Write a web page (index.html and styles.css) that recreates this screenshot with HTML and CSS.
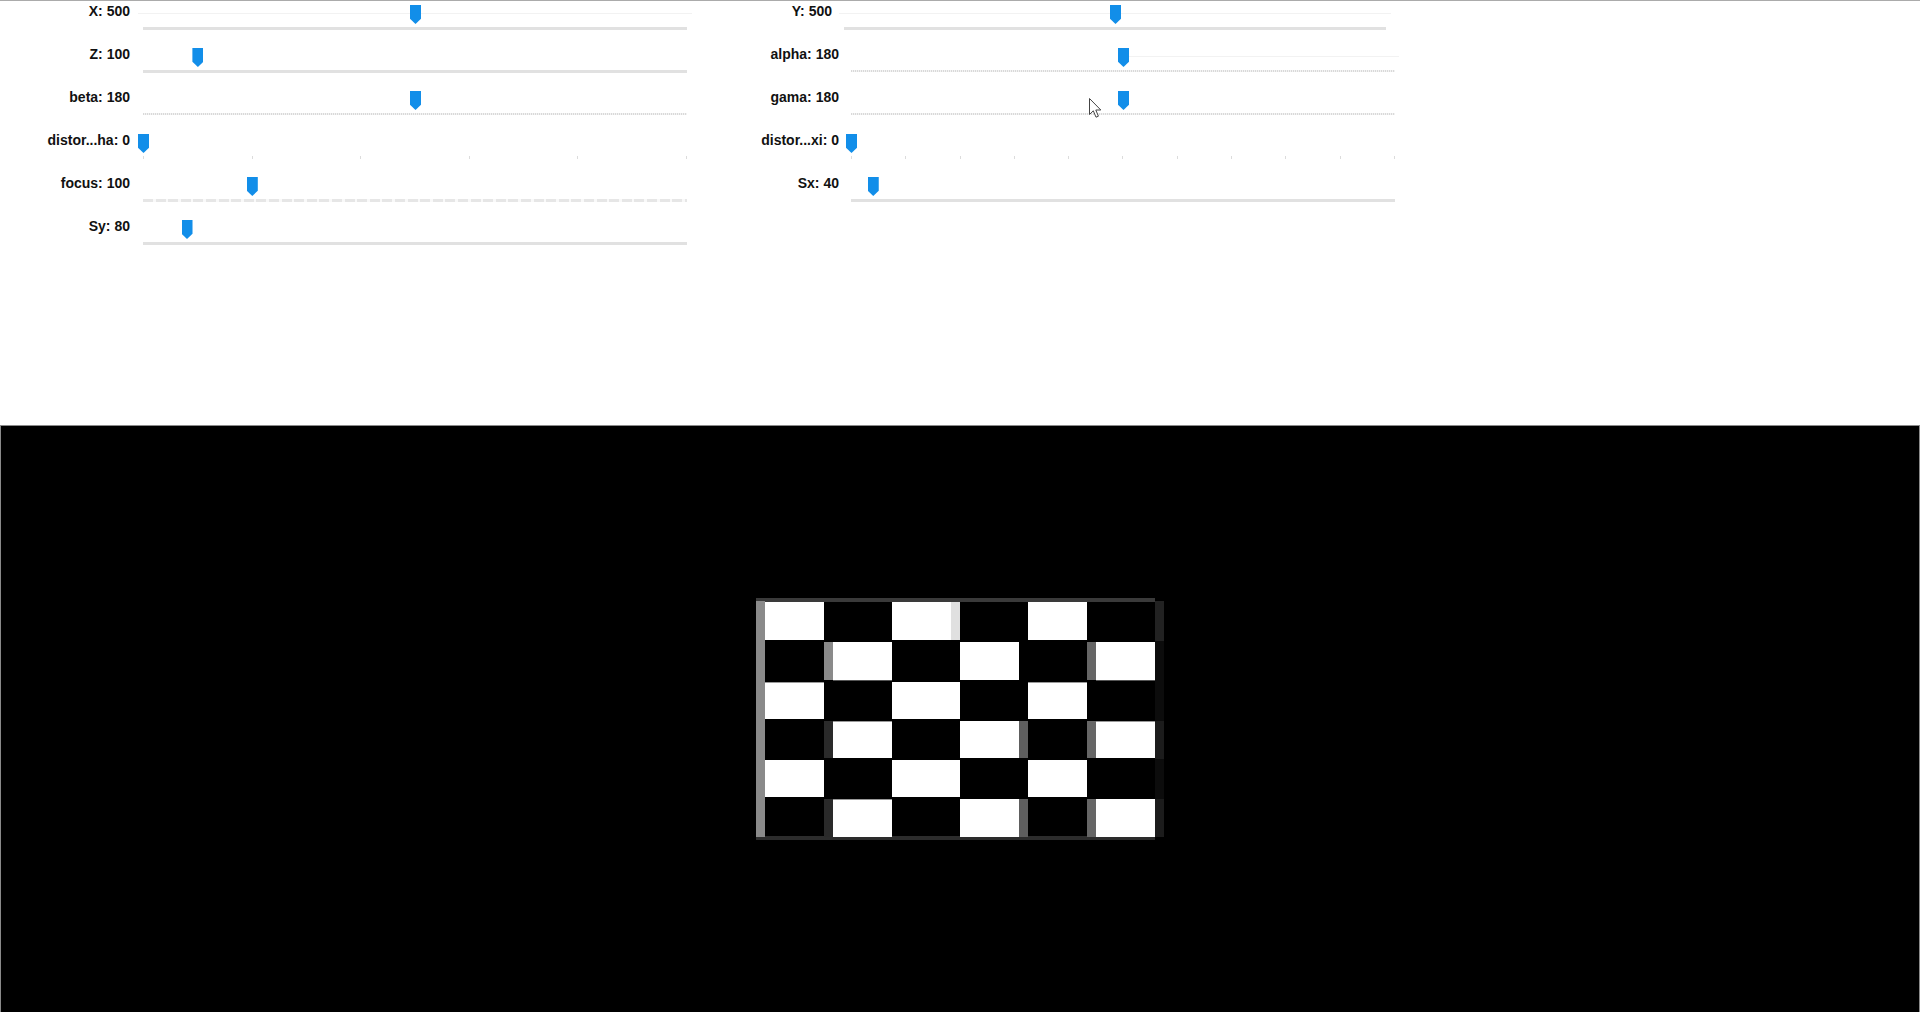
FILE: index.html
```html
<!DOCTYPE html>
<html lang="en">
<head>
<meta charset="utf-8">
<title>Trackbars</title>
<link rel="stylesheet" href="styles.css">
</head>
<body>
<section class="controls">
  <div class="column column-left">
    <div class="row"><span class="label">X: 500</span><div class="slider"><i class="faint"></i><div class="track solid"></div><b class="thumb" style="left:50%"></b></div></div>
    <div class="row"><span class="label">Z: 100</span><div class="slider"><div class="track solid"></div><b class="thumb" style="left:10%"></b></div></div>
    <div class="row"><span class="label">beta: 180</span><div class="slider"><div class="track dotted"></div><b class="thumb" style="left:50%"></b></div></div>
    <div class="row"><span class="label">distor...ha: 0</span><div class="slider"><div class="ticks"><i></i><i></i><i></i><i></i><i></i><i></i></div><b class="thumb" style="left:0%"></b></div></div>
    <div class="row"><span class="label">focus: 100</span><div class="slider"><div class="track dashed"></div><b class="thumb" style="left:20%"></b></div></div>
    <div class="row"><span class="label">Sy: 80</span><div class="slider"><div class="track solid"></div><b class="thumb" style="left:8%"></b></div></div>
  </div>
  <div class="column column-right">
    <div class="row row-shift"><span class="label">Y: 500</span><div class="slider slider-short"><i class="faint"></i><div class="track solid"></div><b class="thumb" style="left:50%"></b></div></div>
    <div class="row"><span class="label">alpha: 180</span><div class="slider"><i class="faint faint-right"></i><div class="track dotted"></div><b class="thumb" style="left:50%"></b></div></div>
    <div class="row"><span class="label">gama: 180</span><div class="slider"><div class="track dotted"></div><b class="thumb" style="left:50%"></b></div></div>
    <div class="row"><span class="label">distor...xi: 0</span><div class="slider"><div class="ticks"><i></i><i></i><i></i><i></i><i></i><i></i><i></i><i></i><i></i><i></i><i></i></div><b class="thumb" style="left:0%"></b></div></div>
    <div class="row"><span class="label">Sx: 40</span><div class="slider"><div class="track solid"></div><b class="thumb" style="left:4%"></b></div></div>
  </div>
</section>
<section class="view">
  <svg class="board" width="408" height="242" viewBox="0 0 408 242">
    <rect x="0" y="0" width="408" height="242" fill="#000"/>
    <rect x="0" y="0" width="399" height="4" fill="#3a3a3a"/>
    <rect x="0" y="238" width="399" height="4" fill="#2c2c2c"/>
    <rect x="0" y="3" width="9" height="236" fill="#8a8a8a"/>
    <rect x="399" y="3" width="9" height="40" fill="#222"/>
    <rect x="399" y="43" width="9" height="80" fill="#0c0c0c"/>
    <rect x="399" y="123" width="9" height="38" fill="#1c1c1c"/>
    <rect x="399" y="161" width="9" height="40" fill="#0c0c0c"/>
    <rect x="399" y="201" width="9" height="38" fill="#1c1c1c"/>
    <!-- row 1 -->
    <rect x="9" y="4" width="59" height="38" fill="#fff"/>
    <rect x="136" y="4" width="59" height="38" fill="#fff"/>
    <rect x="195" y="4" width="9" height="38" fill="#e0e0e0"/>
    <rect x="272" y="4" width="59" height="38" fill="#fff"/>
    <!-- row 2 -->
    <rect x="68" y="44" width="9" height="38" fill="#8a8a8a"/>
    <rect x="77" y="44" width="59" height="38" fill="#fff"/>
    <rect x="204" y="44" width="59" height="38" fill="#fff"/>
    <rect x="331" y="44" width="9" height="38" fill="#666"/>
    <rect x="340" y="44" width="59" height="38" fill="#fff"/>
    <rect x="77" y="82" width="59" height="1" fill="#555"/>
    <rect x="340" y="82" width="59" height="1" fill="#555"/>
    <!-- row 3 -->
    <rect x="9" y="84" width="59" height="1" fill="#999"/>
    <rect x="9" y="85" width="59" height="36" fill="#fff"/>
    <rect x="136" y="84" width="68" height="37" fill="#fff"/>
    <rect x="272" y="84" width="59" height="1" fill="#999"/>
    <rect x="272" y="85" width="59" height="36" fill="#fff"/>
    <!-- row 4 -->
    <rect x="68" y="123" width="9" height="37" fill="#2a2a2a"/>
    <rect x="77" y="123" width="59" height="1" fill="#999"/>
    <rect x="77" y="124" width="59" height="36" fill="#fff"/>
    <rect x="204" y="123" width="59" height="37" fill="#fff"/>
    <rect x="263" y="123" width="9" height="37" fill="#5e5e5e"/>
    <rect x="331" y="123" width="9" height="37" fill="#666"/>
    <rect x="340" y="123" width="59" height="1" fill="#999"/>
    <rect x="340" y="124" width="59" height="36" fill="#fff"/>
    <!-- row 5 -->
    <rect x="9" y="162" width="59" height="37" fill="#fff"/>
    <rect x="136" y="162" width="68" height="37" fill="#fff"/>
    <rect x="272" y="162" width="59" height="37" fill="#fff"/>
    <!-- row 6 -->
    <rect x="68" y="201" width="9" height="38" fill="#2a2a2a"/>
    <rect x="77" y="201" width="59" height="1" fill="#999"/>
    <rect x="77" y="202" width="59" height="37" fill="#fff"/>
    <rect x="204" y="201" width="59" height="38" fill="#fff"/>
    <rect x="263" y="201" width="9" height="38" fill="#5e5e5e"/>
    <rect x="331" y="201" width="9" height="38" fill="#666"/>
    <rect x="340" y="201" width="59" height="38" fill="#fff"/>
  </svg>
</section>
<svg class="cursor" width="13" height="21" viewBox="0 0 13 21">
  <path d="M0.5 0.5 L0.5 16.5 L4.3 12.8 L7 19.2 L9.4 18.2 L6.8 12 L11.8 12 Z" fill="#fff" stroke="#444" stroke-width="1" stroke-linejoin="round"/>
</svg>
</body>
</html>
```
FILE: styles.css
```css
html, body {
  margin: 0;
  padding: 0;
}

body {
  width: 1920px;
  height: 1012px;
  overflow: hidden;
  background: #fff;
  font-family: "Liberation Sans", Arial, sans-serif;
  position: relative;
}

.controls {
  box-sizing: border-box;
  height: 425px;
  border-top: 1px solid #ababab;
  display: grid;
  grid-template-columns: 700px 1fr;
  align-items: start;
}

.column {
  display: flex;
  flex-direction: column;
}

.row {
  display: flex;
  align-items: flex-start;
  height: 43px;
}

.row-shift {
  margin-left: -7px;
}

.label {
  height: 18px;
  margin-top: 1px;
  line-height: 18px;
  font-size: 14px;
  font-weight: bold;
  color: #111;
  text-align: right;
  white-space: nowrap;
}

.column-left .label {
  width: 130px;
  margin-right: 13px;
}

.column-right .label {
  width: 139px;
  margin-right: 12px;
}

.slider {
  position: relative;
  width: 544px;
  height: 43px;
  padding-top: 26px;
  box-sizing: border-box;
}

.slider-short {
  width: 542px;
}

.faint {
  position: absolute;
  left: -5px;
  right: -5px;
  top: 12px;
  height: 1px;
  background: #f2f2f2;
}

.faint-right {
  left: 50%;
  right: -4px;
}

.track {
  height: 3px;
}

.track.solid {
  background: #e1e1e1;
}

.track.dotted {
  height: 2px;
  background: repeating-linear-gradient(90deg, #d9d9d9 0 1px, #f3f3f3 1px 2px);
}

.track.dashed {
  background: repeating-linear-gradient(90deg, #e6e6e6 0 10px, #f9f9f9 10px 12.6px);
}

.ticks {
  display: flex;
  justify-content: space-between;
}

.ticks i {
  display: block;
  width: 1px;
  height: 3px;
  background: #dcdcdc;
}

.thumb {
  position: absolute;
  top: 4px;
  width: 11px;
  height: 19px;
  margin-left: -5px;
  background: #128ee9;
  clip-path: polygon(0 0, 100% 0, 100% 72%, 50% 100%, 0 72%);
}

.view {
  box-sizing: border-box;
  height: 587px;
  background: #000;
  border: 1px solid #8a8a8a;
  border-bottom: none;
  display: flex;
  align-items: center;
  justify-content: center;
}

.board {
  display: block;
}

.cursor {
  position: absolute;
  left: 1089px;
  top: 98px;
}
```
